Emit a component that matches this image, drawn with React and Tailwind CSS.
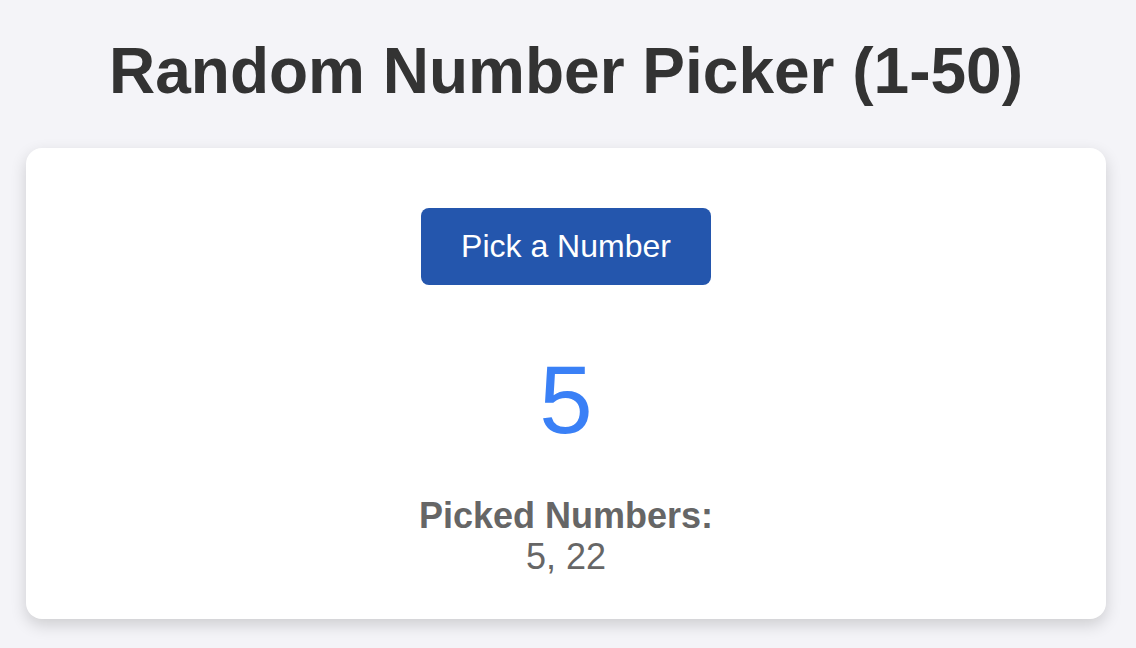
import { useState } from "react";

export default function App() {
  const [current, setCurrent] = useState(5);
  const [picked, setPicked] = useState([5, 22]);

  const pickNumber = () => {
    const remaining = [];
    for (let i = 1; i <= 50; i++) {
      if (!picked.includes(i)) remaining.push(i);
    }
    if (remaining.length === 0) return;
    const n = remaining[Math.floor(Math.random() * remaining.length)];
    setCurrent(n);
    setPicked((prev) => [...prev, n]);
  };

  return (
    <div
      className="min-h-screen bg-[#f4f4f8] pt-[34px] pb-[29px] pr-[4px]"
      style={{ fontFamily: '"Liberation Sans", Arial, sans-serif' }}
    >
      <h1 className="text-center text-[64px] leading-[74px] font-bold text-[#333333]">
        Random Number Picker (1-50)
      </h1>

      {/* Card */}
      <div className="mx-[26px] mt-[40px] bg-white rounded-[16px] shadow-[0_6px_16px_rgba(0,0,0,0.16)] pt-[60px] pb-[42px] flex flex-col items-center">
        <button
          onClick={pickNumber}
          className="bg-[#2456ad] text-white text-[32px] leading-[37px] px-[40px] py-[20px] rounded-[8px] cursor-pointer"
        >
          Pick a Number
        </button>

        <div className="mt-[60px] text-[96px] leading-[110px] text-[#3a80f6]">
          {current}
        </div>

        <div className="mt-[40px] text-center text-[36px] leading-[41px] text-[#666666]">
          <div className="font-bold">Picked Numbers:</div>
          <div>{picked.join(", ")}</div>
        </div>
      </div>
    </div>
  );
}
